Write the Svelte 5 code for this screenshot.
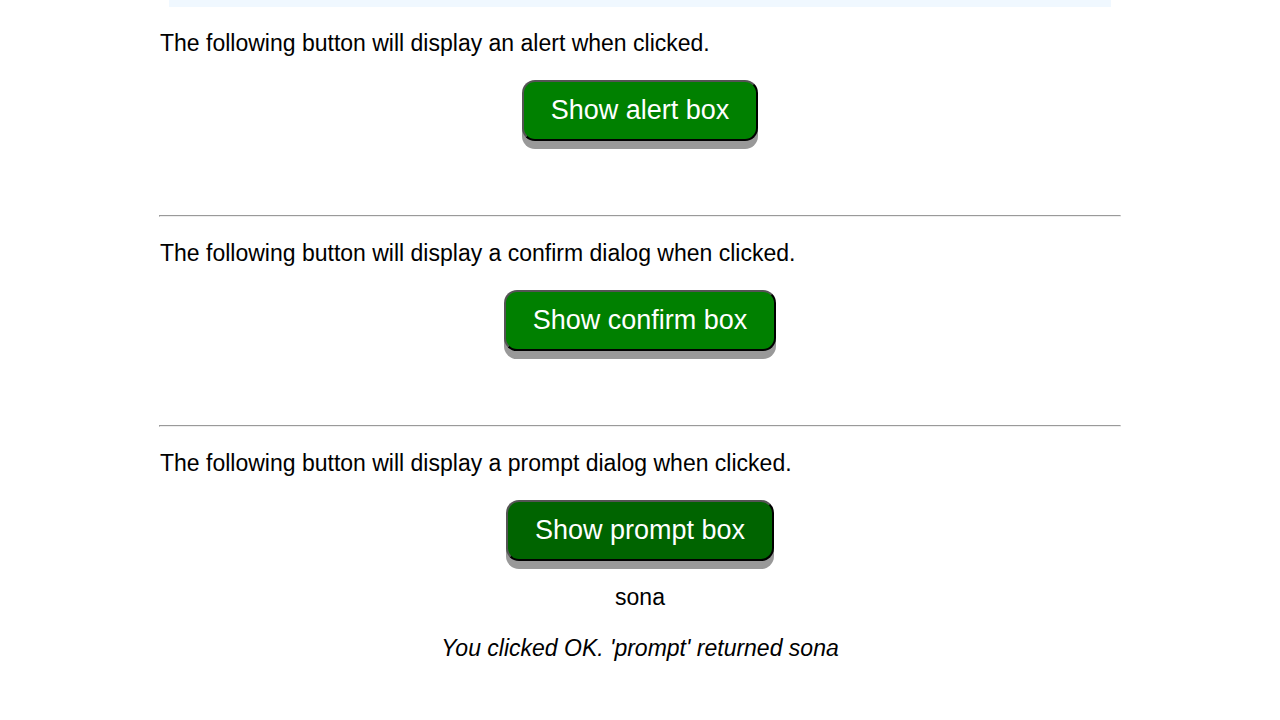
<script>
  let message = $state("sona");
  let result = $state("You clicked OK. 'prompt' returned sona");

  function showAlert() {
    alert("Hello");
  }

  function showConfirm() {
    confirm("Are you sure?");
  }

  function showPrompt() {
    const answer = prompt("Enter your name");
    message = answer ?? "";
    result = answer === null ? "You clicked Cancel." : `You clicked OK. 'prompt' returned ${answer}`;
  }
</script>

<main>
  <div class="banner"></div>

  <section>
    <p>The following button will display an alert when clicked.</p>
    <button type="button" onclick={showAlert}>Show alert box</button>
  </section>
  <hr />
  <section>
    <p>The following button will display a confirm dialog when clicked.</p>
    <button type="button" onclick={showConfirm}>Show confirm box</button>
  </section>
  <hr />
  <section>
    <p>The following button will display a prompt dialog when clicked.</p>
    <button type="button" class="active" onclick={showPrompt}>Show prompt box</button>
    <output>{message}</output>
    <p class="result">{result}</p>
  </section>
</main>

<style>
  :global(body) {
    background: #fff;
  }

  main {
    width: 75%;
    margin: 0 auto;
    padding-bottom: 24px;
    font: 23px/26px "Liberation Sans", Arial, sans-serif;
    color: #000;
  }

  .banner {
    height: 7px;
    margin: 0 9px;
    background: #f0f8ff;
  }

  section {
    display: flex;
    flex-direction: column;
    align-items: center;
    padding-top: 23px;
  }

  p {
    align-self: stretch;
    margin: 0 0 24px;
  }

  button {
    padding: 13px 27px;
    border: 2px outset #000;
    border-radius: 13px;
    background: #008000;
    box-shadow: 0 8px #999;
    color: #fff;
    font: 27px/31px "Liberation Sans", Arial, sans-serif;
    cursor: pointer;
  }

  .active {
    background: #006400;
  }

  hr {
    height: 0;
    margin: 74px -1px 0;
    border: 1px solid;
    border-color: #9a9a9a #eee #eee #9a9a9a;
  }

  output {
    margin: 23px 0 25px;
  }

  .result {
    margin: 0;
    text-align: center;
    font-style: italic;
  }
</style>
